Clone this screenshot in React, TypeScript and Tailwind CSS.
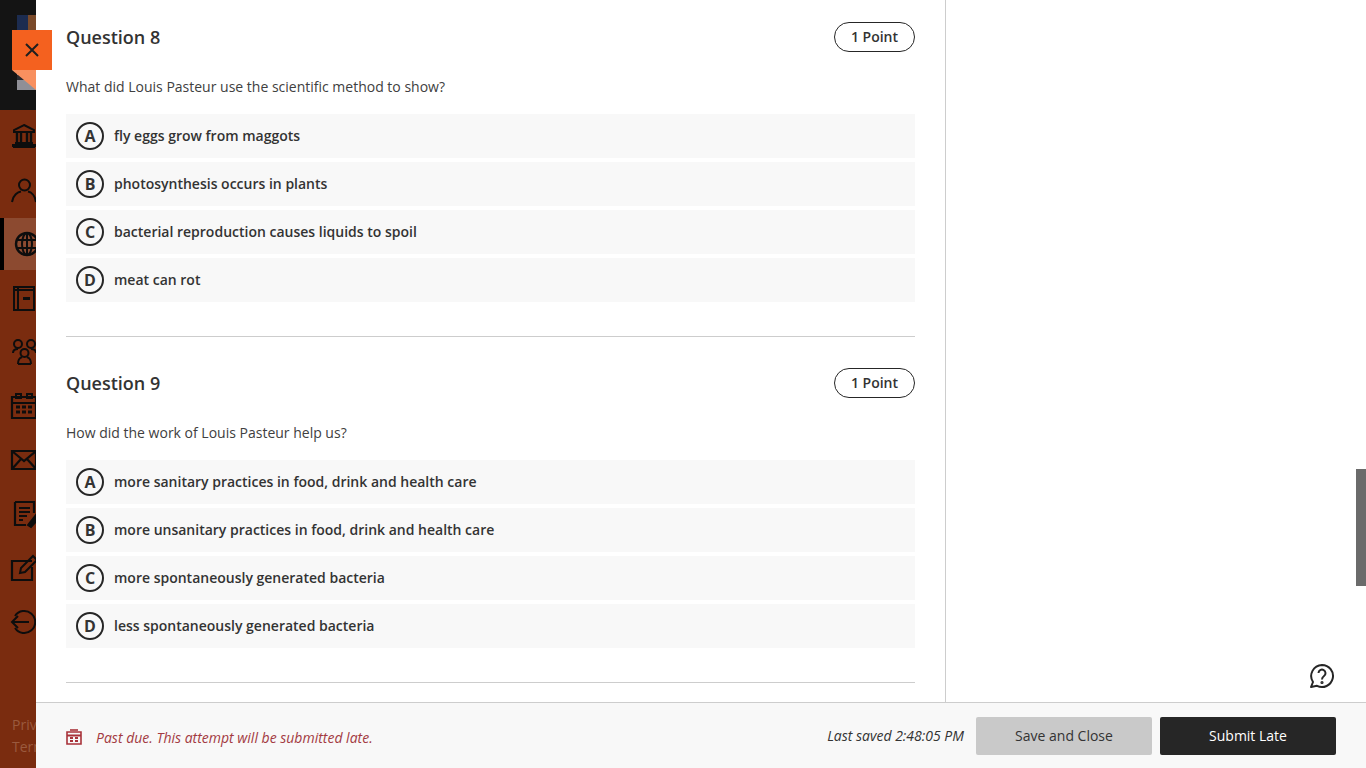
import type { ReactNode } from "react";

const QUESTIONS = [
  {
    title: "Question 8",
    text: "What did Louis Pasteur use the scientific method to show?",
    options: [
      "fly eggs grow from maggots",
      "photosynthesis occurs in plants",
      "bacterial reproduction causes liquids to spoil",
      "meat can rot",
    ],
  },
  {
    title: "Question 9",
    text: "How did the work of Louis Pasteur help us?",
    options: [
      "more sanitary practices in food, drink and health care",
      "more unsanitary practices in food, drink and health care",
      "more spontaneously generated bacteria",
      "less spontaneously generated bacteria",
    ],
  },
];

const LETTERS = ["A", "B", "C", "D"];

function Icon({ children }: { children: ReactNode }) {
  return (
    <svg width="28" height="28" viewBox="0 0 28 28" fill="none" stroke="#0d0d0d" strokeWidth="2" className="shrink-0 overflow-visible">
      {children}
    </svg>
  );
}

const NAV_ICONS: ReactNode[] = [
  <Icon key="inst">
    <path d="M14 3 L24 8 V10 H4 V8 Z M5 21 H23 M3 25 H25" />
    <path d="M3 25 V23 H25 V25" />
    <path d="M7 11 V20 M11 11 V20 M17 11 V20 M21 11 V20" strokeWidth="2.4" />
  </Icon>,
  <Icon key="user">
    <circle cx="14.5" cy="9" r="5.5" />
    <path d="M2 26 C3 19 8 16 11 15.5 M18 15.5 C21 16 25 19 26 26" />
  </Icon>,
  <Icon key="globe">
    <circle cx="14" cy="14" r="11" strokeWidth="2.4" />
    <ellipse cx="14" cy="14" rx="5" ry="11" />
    <path d="M3 10 H25 M3 18 H25 M14 3 V25" />
  </Icon>,
  <Icon key="book">
    <path d="M4 3 H24 V26 H4 Z M8 3 V26 M4 6 H24" />
    <rect x="13" y="13" width="7" height="3" fill="#0d0d0d" stroke="none" />
  </Icon>,
  <Icon key="groups">
    <circle cx="8" cy="6" r="4" />
    <circle cx="21" cy="6" r="4" />
    <circle cx="14.5" cy="15" r="4" />
    <path d="M3 15 C3 12 5 11 8 11 M26 15 C26 12 24 11 21 11 M8 26 C8 21 10 20 12 19 M21 26 C21 21 19 20 17 19 M8 26 H21" />
  </Icon>,
  <Icon key="calendar">
    <path d="M2 5 H26 V26 H2 Z M2 11 H26" strokeWidth="2.2" />
    <path d="M6 2 H11 V6 H6 Z M17 2 H22 V6 H17 Z" />
    <path d="M6 15 H10 M12 15 H16 M18 15 H22 M6 20 H10 M12 20 H16 M18 20 H22" strokeWidth="3" />
  </Icon>,
  <Icon key="mail">
    <path d="M2 5 H26 V23 H2 Z M2 5 L14 15 L26 5 M2 23 L11 13 M26 23 L17 13" strokeWidth="2.2" />
  </Icon>,
  <Icon key="grades">
    <path d="M5 2 H24 V13 M5 2 V25 H16" strokeWidth="2.2" />
    <path d="M9 8 H20 M9 12 H20 M9 16 H17 M9 20 H13" />
    <path d="M18 25 L26 15 L29 18 L21 27 Z" fill="#0d0d0d" />
  </Icon>,
  <Icon key="edit">
    <path d="M22 7 H2 V26 H22 V13" strokeWidth="2.2" />
    <path d="M10 19 L11 14 L23 2 L27 6 L15 18 Z" />
  </Icon>,
  <Icon key="logout">
    <path d="M5 8 A11 11 0 1 1 5 20" />
    <path d="M2 14 H19 M8 8 L2 14 L8 20" />
  </Icon>,
];

function Question({ title, text, options }: { title: string; text: string; options: string[] }) {
  return (
    <section>
      <div className="flex items-center justify-between h-[30px]">
        <h2 className="text-[18px] font-semibold text-[#333333] leading-[30px]">{title}</h2>
        <span className="h-[30px] w-[81px] pb-px flex items-center justify-center rounded-full border border-[#262626] text-[14px] font-semibold text-[#333333]">
          1 Point
        </span>
      </div>
      <p className="mt-[25px] h-[20px] text-[14px] leading-[20px] text-[#404040]">{text}</p>
      <ul className="mt-[17px] flex flex-col gap-1">
        {options.map((opt, i) => (
          <li key={opt} className="h-[44px] flex items-center gap-[10px] pl-[10px] bg-[#f8f8f8]">
            <span className="w-[28px] h-[28px] flex items-center justify-center rounded-full border-2 border-[#262626] text-[16px] font-bold text-[#333333]">
              {LETTERS[i]}
            </span>
            <span className="pb-[2px] text-[14px] font-semibold text-[#333333]">{opt}</span>
          </li>
        ))}
      </ul>
      <hr className="mt-[34px] mb-[31px] border-t border-[#cdcdcd]" />
    </section>
  );
}

export default function App() {
  return (
    <div className="relative flex h-screen w-full overflow-hidden bg-white font-['Open_Sans',sans-serif]">
      {/* dimmed course nav behind the panel */}
      <aside className="w-[36px] shrink-0 flex flex-col overflow-hidden bg-[#7a2c0f]">
        <div className="h-[110px] shrink-0 bg-[#141414] pt-[15px] pl-[17px]">
          <div className="w-[19px] h-[75px] bg-[#8f8f96] overflow-hidden flex flex-col justify-between">
            <div className="flex h-[15px]">
              <div className="w-[11px] bg-[#1c2c50]" />
              <div className="w-[8px] bg-[#7a4a2a]" />
            </div>
            <div className="h-[5px] mb-[10px] w-[8px] bg-[#2a2a30]" />
          </div>
        </div>
        <nav className="flex flex-col -mt-px">
          {NAV_ICONS.map((icon, i) => (
            <div
              key={i}
              className={
                i === 2
                  ? "h-[52px] my-px flex items-center pl-[9px] border-l-4 border-black bg-[#8c4a30]"
                  : "h-[54px] flex items-center pl-[10px]"
              }
            >
              {icon}
            </div>
          ))}
        </nav>
        <div className="mt-auto pb-[10px] pl-[12px] text-[14px] leading-[22px] whitespace-nowrap text-[#9a5a3e]">
          <div>Privacy</div>
          <div>Terms</div>
        </div>
      </aside>

      <main className="flex-1 min-w-0 flex flex-col">
        <div className="flex-1 min-h-0 flex overflow-hidden">
          <div className="w-[910px] shrink-0 border-r border-[#cdcdcd] pt-[22px] pl-[30px] pr-[30px] overflow-hidden">
            {QUESTIONS.map((q) => (
              <Question key={q.title} {...q} />
            ))}
          </div>
          <div className="flex-1" />
        </div>
        <footer className="h-[66px] shrink-0 flex items-center border-t border-[#cdcdcd] bg-[#f8f8f8] pl-[30px] pr-[30px]">
          <svg width="16" height="16" viewBox="0 0 16 16" className="shrink-0 mt-[3px]" fill="none" stroke="#a8323a" strokeWidth="1.6">
            <path d="M1 3 H15 V15 H1 Z" />
            <path d="M1 6.5 H15" strokeWidth="2" />
            <path d="M4 1 H12" strokeWidth="1.6" />
            <path d="M4 9 H7 M9 9 H12 M4 12 H7 M9 12 H12" strokeWidth="2" />
          </svg>
          <span className="ml-[14px] mt-[3px] text-[14px] italic text-[#a33a42]">Past due. This attempt will be submitted late.</span>
          <span className="ml-auto mr-[12px] text-[14px] italic text-[#333333]">Last saved 2:48:05 PM</span>
          <button className="w-[176px] h-[38px] pb-px rounded-[2px] bg-[#c9c9c9] text-[14px] text-[#333333]">Save and Close</button>
          <button className="ml-2 w-[176px] h-[38px] pb-px rounded-[2px] bg-[#262626] text-[14px] text-white">Submit Late</button>
        </footer>
      </main>

      {/* close button with folded corner */}
      <button className="absolute left-[12px] top-[30px] w-[40px] h-[40px] flex items-center justify-center bg-[#f4611f]">
        <svg width="16" height="16" viewBox="0 0 16 16" stroke="#1f1f1f" strokeWidth="2">
          <path d="M2 2 L14 14 M14 2 L2 14" />
        </svg>
      </button>
      <div className="absolute left-[12px] top-[70px] w-[24px] h-[20px] bg-[#f8905f] [clip-path:polygon(0_0,100%_0,100%_100%)]" />

      {/* help bubble */}
      <svg className="absolute left-[1309px] top-[663px]" width="26" height="26" viewBox="0 0 26 26" fill="none" stroke="#262626" strokeWidth="2">
        <path d="M13 2 A11 11 0 1 1 8 22.8 L2 24 L4 19 A11 11 0 0 1 13 2 Z" strokeLinejoin="round" />
        <path d="M9.5 10 A3.5 3.5 0 1 1 15 13 C13.5 14 13 14.5 13 16.5" />
        <circle cx="13" cy="19.5" r="0.6" fill="#262626" />
      </svg>

      {/* page scrollbar */}
      <div className="absolute right-0 top-[469px] w-[10px] h-[117px] bg-[#6b6b6b]" />
    </div>
  );
}
